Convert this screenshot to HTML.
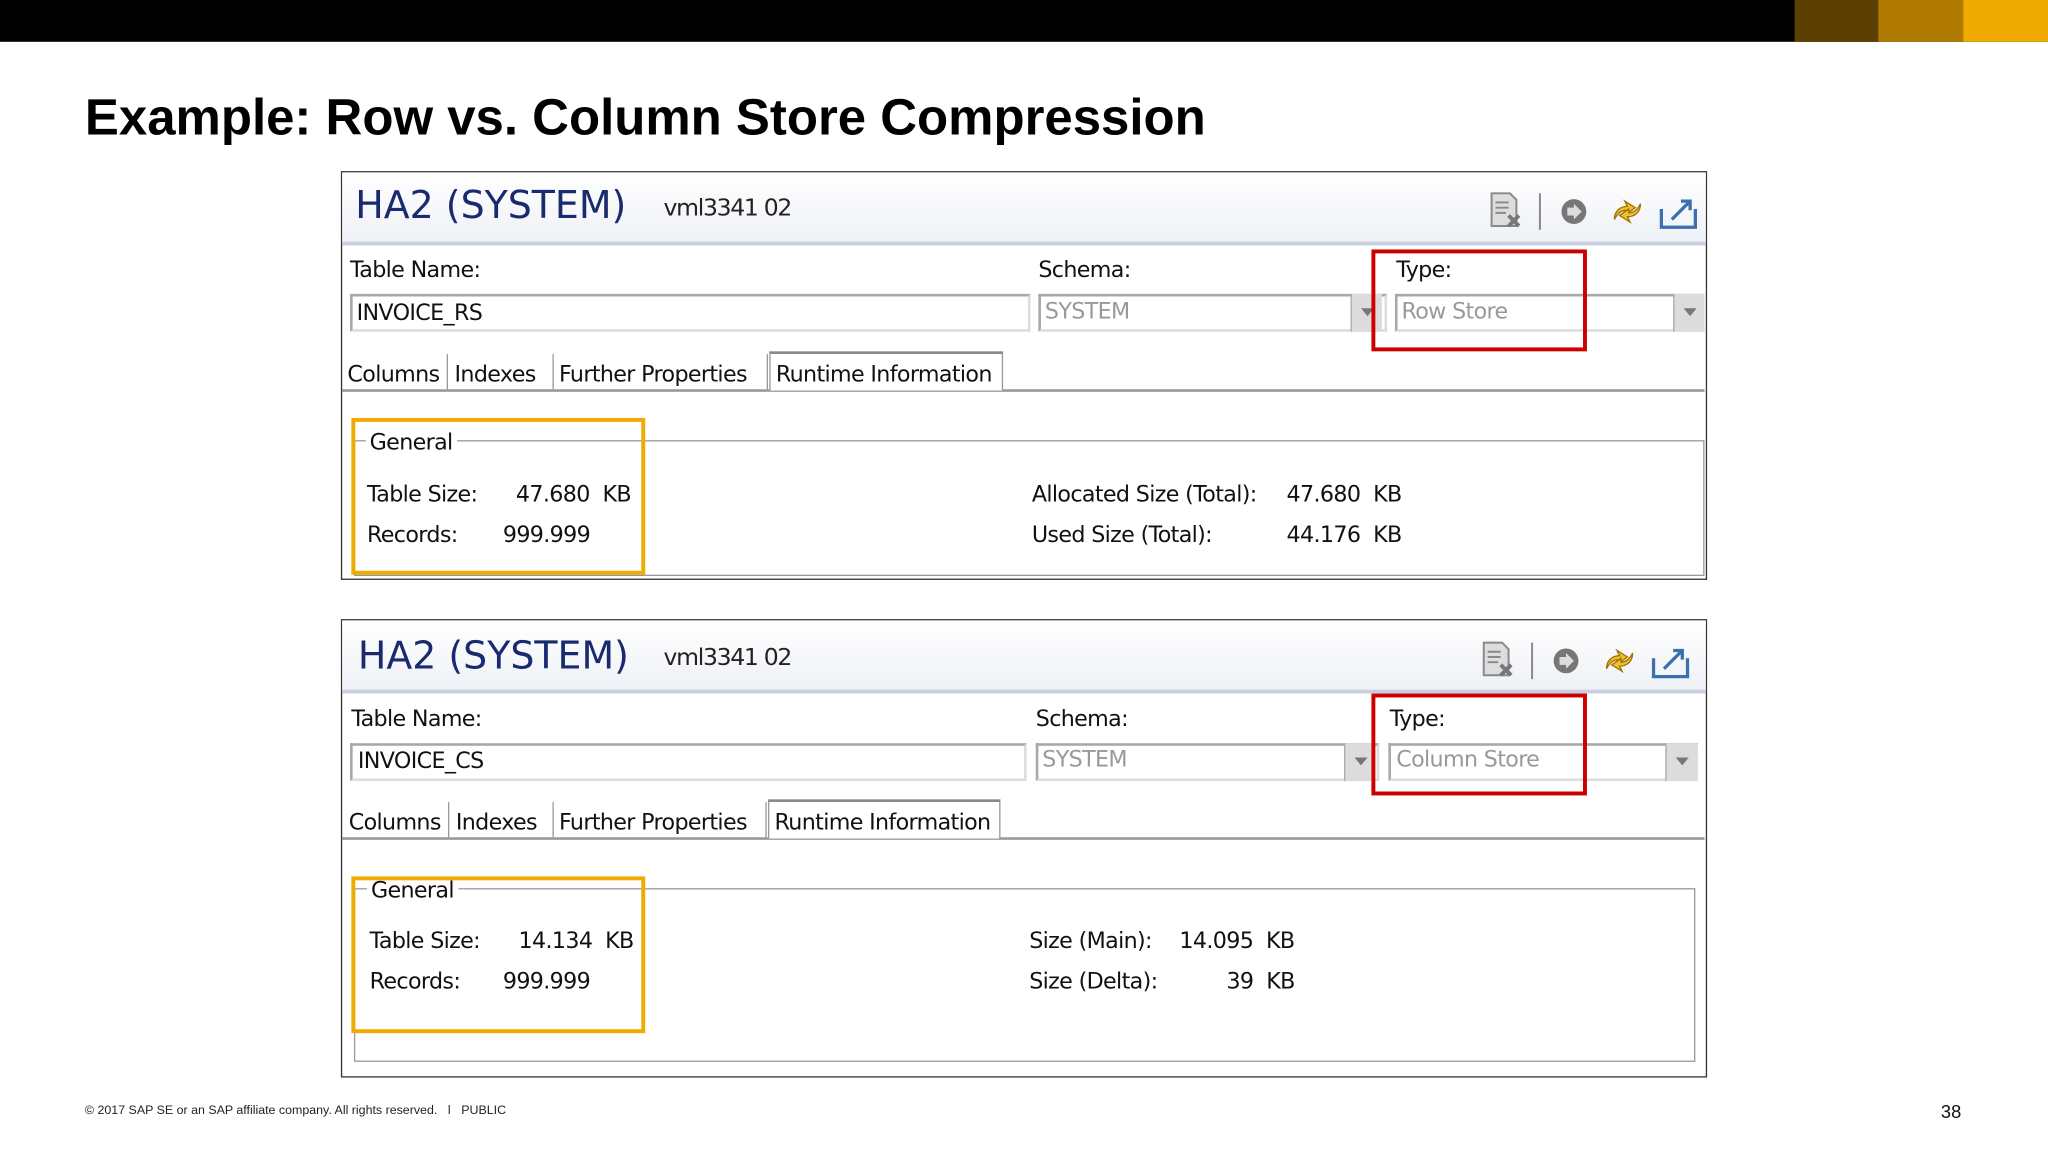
<!DOCTYPE html>
<html><head><meta charset="utf-8"><style>
html,body{margin:0;padding:0;background:#fff;width:2048px;height:1152px;overflow:hidden}
#s{position:absolute;left:0;top:0;width:1568px;height:882px;transform:scale(1.306122);transform-origin:0 0;font-family:"DejaVu Sans","Liberation Sans",sans-serif}
.a{position:absolute;white-space:nowrap}
.t{font-size:17px;color:#111;letter-spacing:-0.5px}
.panel{position:absolute;left:261px;width:1044px;border:1px solid #333;background:#fff}
.hdr{position:absolute;left:0;top:0;width:1044px;height:53px;background:linear-gradient(#fff,#eef1f6);border-bottom:3px solid #c9cfe0}
.inp{position:absolute;border:2px solid #a8a8a8;border-right-color:#ddd;border-bottom-color:#ddd;background:#fff;height:29px;box-sizing:border-box}
.btn{position:absolute;width:24px;height:29px;background:#dcdcdc;border-left:1px solid #aaa;box-sizing:border-box}
.btn:after{content:"";position:absolute;left:7px;top:11px;border-left:5px solid transparent;border-right:5px solid transparent;border-top:6px solid #777}
.tab{position:absolute;height:27px;border-right:1px solid #999;font-size:17px;color:#111;letter-spacing:-0.5px;line-height:32px;white-space:nowrap;overflow:hidden}
.red{position:absolute;border:3px solid #cc0000;box-sizing:border-box}
.yel{position:absolute;border:3px solid #f0ab00;box-sizing:border-box}
.grp{position:absolute;border:1px solid #999;box-shadow:inset 1px 1px 0 #fff}
</style></head><body><div id="s">
<div class="a" style="left:0;top:0;width:1568px;height:32px;background:#000"></div>
<div class="a" style="left:1374px;top:0;width:64px;height:32px;background:#5a3f00"></div>
<div class="a" style="left:1438px;top:0;width:65px;height:32px;background:#b07a00"></div>
<div class="a" style="left:1503px;top:0;width:65px;height:32px;background:#f0ab00"></div>
<div class="a" style="left:65px;top:69px;font-family:'Liberation Sans',sans-serif;font-weight:bold;font-size:39px;color:#000">Example: Row vs. Column Store Compression</div>

<!-- panel 1 -->
<div class="panel" style="top:131px;height:311px">
 <div class="hdr"></div>
 <div class="a" style="left:10px;top:8px;font-size:29px;color:#1a2a6e;letter-spacing:0px">HA2 (SYSTEM)</div>
 <div class="a" style="left:246px;top:17px;font-size:18px;color:#222;letter-spacing:-1px">vml3341 02</div>
 <svg class="a" style="left:876px;top:14px" width="168" height="32" viewBox="0 0 168 32">
  <path d="M4 2h14l5 5v20H4z" fill="#ddd" stroke="#888" stroke-width="1.5"/><path d="M7 9h10M7 13h10M7 17h8" stroke="#888" stroke-width="1.5"/><path d="M17 19l8 8M25 19l-8 8" stroke="#777" stroke-width="3"/>
  <path d="M41 2v28" stroke="#888" stroke-width="1.5"/>
  <circle cx="67" cy="16" r="9.5" fill="#777"/><path d="M62 13h5v-3l6 6-6 6v-3h-5z" fill="#ddd"/>
  <path d="M98 22c0-6 4-10 10-10l-2-4 8 5-7 5 0-3c-4 0-7 3-9 7z" fill="#f0c030" stroke="#a07000" stroke-width="1"/><path d="M118 10c0 6-4 10-10 10l2 4-8-5 7-5 0 3c4 0 7-3 9-7z" fill="#f0c030" stroke="#a07000" stroke-width="1"/>
  <path d="M134 14v14h26V14" fill="none" stroke="#3a6fb0" stroke-width="2.5"/><path d="M142 22l14-14M149 8h7v7" fill="none" stroke="#3a6fb0" stroke-width="2.5"/>
 </svg>
</div>
<div class="a t" style="left:268px;top:197px">Table Name:</div>
<div class="inp" style="left:268px;top:225px;width:521px"></div>
<div class="a t" style="left:273px;top:230px">INVOICE_RS</div>
<div class="a t" style="left:795px;top:197px">Schema:</div>
<div class="inp" style="left:795px;top:225px;width:267px"></div><div class="btn" style="left:1034px;top:225px"></div>
<div class="a t" style="left:800px;top:229px;color:#999">SYSTEM</div>
<div class="a t" style="left:1069px;top:197px">Type:</div>
<div class="inp" style="left:1068px;top:225px;width:237px"></div><div class="btn" style="left:1281px;top:225px"></div>
<div class="a t" style="left:1073px;top:229px;color:#999">Row Store</div>
<div class="red" style="left:1050px;top:191px;width:165px;height:78px"></div>
<div class="a" style="left:262px;top:298px;width:1043px;border-top:2px solid #999"></div>
<div class="tab" style="left:262px;top:271px;width:81px;padding-left:4px;box-sizing:border-box">Columns</div>
<div class="tab" style="left:344px;top:271px;width:80px;padding-left:4px;box-sizing:border-box">Indexes</div>
<div class="tab" style="left:425px;top:271px;width:163px;padding-left:3px;box-sizing:border-box">Further Properties</div>
<div class="tab" style="left:589px;top:269px;width:179px;height:30px;border:1px solid #999;border-bottom:none;border-top:2px solid #888;background:#fff;padding-left:4px;box-sizing:border-box;line-height:32px">Runtime Information</div>
<div class="grp" style="left:271px;top:337px;width:1032px;height:102px"></div>
<div class="a t" style="left:280px;top:329px;background:#fff;padding:0 3px">General</div>
<div class="a t" style="left:281px;top:369px">Table Size:</div><div class="a t" style="left:395px;top:369px">47.680&nbsp; KB</div>
<div class="a t" style="left:281px;top:400px">Records:</div><div class="a t" style="left:385px;top:400px">999.999</div>
<div class="a t" style="left:790px;top:369px">Allocated Size (Total):</div><div class="a t" style="left:985px;top:369px">47.680&nbsp; KB</div>
<div class="a t" style="left:790px;top:400px">Used Size (Total):</div><div class="a t" style="left:985px;top:400px">44.176&nbsp; KB</div>
<div class="yel" style="left:269px;top:320px;width:225px;height:120px"></div>

<!-- panel 2 -->
<div class="panel" style="top:474px;height:349px">
 <div class="hdr"></div>
 <div class="a" style="left:12px;top:10px;font-size:29px;color:#1a2a6e;letter-spacing:0px">HA2 (SYSTEM)</div>
 <div class="a" style="left:246px;top:18px;font-size:18px;color:#222;letter-spacing:-1px">vml3341 02</div>
 <svg class="a" style="left:870px;top:15px" width="168" height="32" viewBox="0 0 168 32">
  <path d="M4 2h14l5 5v20H4z" fill="#ddd" stroke="#888" stroke-width="1.5"/><path d="M7 9h10M7 13h10M7 17h8" stroke="#888" stroke-width="1.5"/><path d="M17 19l8 8M25 19l-8 8" stroke="#777" stroke-width="3"/>
  <path d="M41 2v28" stroke="#888" stroke-width="1.5"/>
  <circle cx="67" cy="16" r="9.5" fill="#777"/><path d="M62 13h5v-3l6 6-6 6v-3h-5z" fill="#ddd"/>
  <path d="M98 22c0-6 4-10 10-10l-2-4 8 5-7 5 0-3c-4 0-7 3-9 7z" fill="#f0c030" stroke="#a07000" stroke-width="1"/><path d="M118 10c0 6-4 10-10 10l2 4-8-5 7-5 0 3c4 0 7-3 9-7z" fill="#f0c030" stroke="#a07000" stroke-width="1"/>
  <path d="M134 14v14h26V14" fill="none" stroke="#3a6fb0" stroke-width="2.5"/><path d="M142 22l14-14M149 8h7v7" fill="none" stroke="#3a6fb0" stroke-width="2.5"/>
 </svg>
</div>
<div class="a t" style="left:269px;top:541px">Table Name:</div>
<div class="inp" style="left:268px;top:569px;width:518px"></div>
<div class="a t" style="left:274px;top:573px">INVOICE_CS</div>
<div class="a t" style="left:793px;top:541px">Schema:</div>
<div class="inp" style="left:793px;top:569px;width:263px"></div><div class="btn" style="left:1029px;top:569px"></div>
<div class="a t" style="left:798px;top:572px;color:#999">SYSTEM</div>
<div class="a t" style="left:1064px;top:541px">Type:</div>
<div class="inp" style="left:1063px;top:569px;width:237px"></div><div class="btn" style="left:1275px;top:569px"></div>
<div class="a t" style="left:1069px;top:572px;color:#999">Column Store</div>
<div class="red" style="left:1050px;top:531px;width:165px;height:78px"></div>
<div class="a" style="left:262px;top:641px;width:1043px;border-top:2px solid #999"></div>
<div class="tab" style="left:262px;top:614px;width:82px;padding-left:5px;box-sizing:border-box">Columns</div>
<div class="tab" style="left:345px;top:614px;width:79px;padding-left:4px;box-sizing:border-box">Indexes</div>
<div class="tab" style="left:425px;top:614px;width:162px;padding-left:3px;box-sizing:border-box">Further Properties</div>
<div class="tab" style="left:588px;top:612px;width:178px;height:30px;border:1px solid #999;border-bottom:none;border-top:2px solid #888;background:#fff;padding-left:4px;box-sizing:border-box;line-height:32px">Runtime Information</div>
<div class="grp" style="left:271px;top:680px;width:1025px;height:131px"></div>
<div class="a t" style="left:281px;top:672px;background:#fff;padding:0 3px">General</div>
<div class="a t" style="left:283px;top:711px">Table Size:</div><div class="a t" style="left:397px;top:711px">14.134&nbsp; KB</div>
<div class="a t" style="left:283px;top:742px">Records:</div><div class="a t" style="left:385px;top:742px">999.999</div>
<div class="a t" style="left:788px;top:711px">Size (Main):</div><div class="a t" style="left:903px;top:711px">14.095&nbsp; KB</div>
<div class="a t" style="left:788px;top:742px">Size (Delta):</div><div class="a t" style="left:939px;top:742px">39&nbsp; KB</div>
<div class="yel" style="left:269px;top:671px;width:225px;height:120px"></div>

<div class="a" style="left:65px;top:845px;font-family:'Liberation Sans',sans-serif;font-size:9.5px;color:#222">© 2017 SAP SE or an SAP affiliate company. All rights reserved.&nbsp;&nbsp; ǀ&nbsp;&nbsp; PUBLIC</div>
<div class="a" style="left:1486px;top:843px;font-family:'Liberation Sans',sans-serif;font-size:14px;color:#111">38</div>
</div></body></html>
